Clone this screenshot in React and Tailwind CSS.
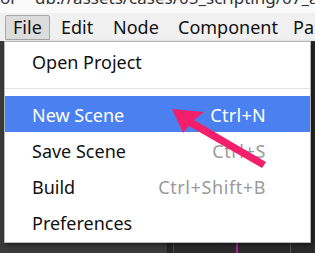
import React from 'react'

const items = [
    { label: 'New Scene', shortcut: 'Ctrl+N', active: true },
    { label: 'Save Scene', shortcut: 'Ctrl+S' },
    { label: 'Build', shortcut: 'Ctrl+Shift+B' },
    { label: 'Preferences', shortcut: '' },
]

const App = () => {
    return (
        <div className="relative w-[315px] h-[253px] overflow-hidden bg-[#2e2e2e] font-['Noto_Sans',sans-serif]">
            {/* path strip at the very top, mostly cut off */}
            <div className="h-[13px] bg-[#fafafa] overflow-hidden">
                <p className="-mt-[14px] text-[17px] leading-[24px] text-[#333] whitespace-nowrap">
                    or&nbsp;&nbsp;&nbsp;&nbsp;db://assets/cases/05_scripting/07_asset_loading
                </p>
            </div>

            {/* menu bar */}
            <div className="h-[28px] bg-[#f0f0f0] flex items-center pl-[5px] whitespace-nowrap text-[18px] text-[#111] overflow-hidden">
                <div className="shrink-0 w-[45px] h-[25px] pl-[7px] flex items-center border border-[#a8a8a8] bg-[#dcdcdc] rounded-t-[2px]">File</div>
                <div className="shrink-0 w-[52px] h-[25px] pl-[11px] flex items-center">Edit</div>
                <div className="shrink-0 w-[65px] h-[25px] pl-[11px] flex items-center">Node</div>
                <div className="shrink-0 w-[115px] h-[25px] pl-[11px] flex items-center">Component</div>
                <div className="shrink-0 h-[25px] pl-[11px] flex items-center">Panel</div>
            </div>

            {/* editor panels behind the menu */}
            <div className="flex h-[212px]">
                <div className="w-[168px] bg-[#3a3a3a] border-r border-[#1e1e1e]"></div>
                <div className="w-[6px] bg-[#262626] border-r border-[#4a4a4a]"></div>
                <div className="flex-1 bg-[#2a2a2a] flex">
                    <div className="w-[62px]"></div>
                    <div className="w-[2px] bg-[#b0209a]"></div>
                    <div className="w-[52px]"></div>
                    <div className="w-[1px] bg-[#555]"></div>
                </div>
            </div>

            {/* File dropdown */}
            <div className="absolute left-[4px] top-[41px] w-[307px] h-[202px] bg-white border border-[#b5b5b5] shadow-[2px_2px_4px_rgba(0,0,0,0.45)] pt-[1px] text-[18px] text-[#111] whitespace-nowrap">
                <div className="h-[36px] flex items-center pl-[27px] pt-[3px]">Open Project</div>
                <div className="mt-[9px] mb-[7px] h-[1px] bg-[#e3e3e3]"></div>
                {items.map(it => (
                    <div key={it.label}
                        className={it.active
                            ? "h-[36px] flex items-center pt-[3px] bg-[#4a80ef] text-white"
                            : "h-[36px] flex items-center pt-[3px]"}>
                        <span className="pl-[27px] flex-1">{it.label}</span>
                        <span className={it.active ? "pr-[44px] text-white tracking-[0.3px]" : "pr-[44px] text-[#9a9a9a] tracking-[0.6px]"}>{it.shortcut}</span>
                    </div>
                ))}
            </div>

            {/* pointer arrow */}
            <svg className="absolute left-0 top-0" width="315" height="253" viewBox="0 0 315 253">
                <path d="M172 109 L204 112 L194 120 L266 162 L262 168 L189 126 L183 133 Z" fill="#f41f6b" />
            </svg>
        </div>
    )
}

export default App
